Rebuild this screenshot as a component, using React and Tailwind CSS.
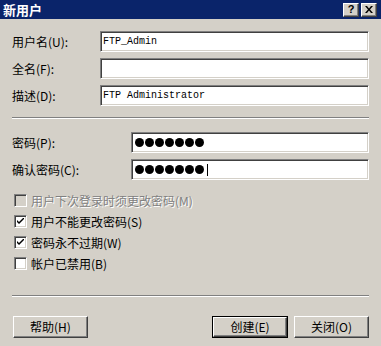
import React from "react";

const cjk = { fontFamily: '"Noto Sans CJK SC", "Noto Sans", sans-serif' };

function Sunken({ children, className = "" }) {
  return (
    <div
      className={
        "h-[21px] bg-white border border-t-[#808080] border-l-[#808080] border-b-white border-r-white shadow-[inset_1px_1px_0_#404040,inset_-1px_-1px_0_#d4d0c8] flex items-center pl-[2px] " +
        className
      }
    >
      {children}
    </div>
  );
}

function Field({ label, value, labelW = "w-[88px]" }) {
  return (
    <div className="flex items-center">
      <div className={labelW + " text-[12px] leading-[14px] text-black"} style={cjk}>
        {label}
      </div>
      <Sunken className="flex-1">
        <span
          className="text-[10px] leading-[12px] text-black whitespace-pre"
          style={{ fontFamily: '"Liberation Mono", monospace' }}
        >
          {value}
        </span>
      </Sunken>
    </div>
  );
}

function Dots({ cursor, n }) {
  const arr = Array.from({ length: n }, (_, i) => i);
  return (
    <div className="flex items-center gap-[1px] pl-[1px]">
      {arr.map((i) => (
        <div key={i} className="w-[9px] h-[9px] rounded-full bg-black" />
      ))}
      {cursor && <div className="w-[1px] h-[12px] bg-black ml-[2px]" />}
    </div>
  );
}

function PwField({ label, cursor, n }) {
  return (
    <div className="flex items-center">
      <div className="w-[119px] text-[12px] leading-[14px] text-black" style={cjk}>
        {label}
      </div>
      <Sunken className="flex-1">
        <Dots cursor={cursor} n={n} />
      </Sunken>
    </div>
  );
}

function Check({ label, checked, disabled }) {
  return (
    <div className="h-[21px] flex items-center">
      <div
        className={
          "w-[13px] h-[13px] ml-[2px] border border-t-[#808080] border-l-[#808080] border-b-white border-r-white shadow-[inset_1px_1px_0_#404040,inset_-1px_-1px_0_#d4d0c8] flex items-center justify-center " +
          (disabled ? "bg-[#d4d0c8]" : "bg-white")
        }
      >
        {checked && (
          <svg width="7" height="7" viewBox="0 0 7 7">
            <path d="M0 2 L0 4 L2 6 L7 1 L7 -1 L2 4 Z" fill="#000" />
          </svg>
        )}
      </div>
      <span
        className={
          "ml-[4px] text-[12px] leading-[14px] " +
          (disabled ? "text-[#808080] [text-shadow:1px_1px_0_#ffffff]" : "text-black")
        }
        style={cjk}
      >
        {label}
      </span>
    </div>
  );
}

function Button({ children, def, className = "" }) {
  const inner = (
    <div className="w-full h-full bg-[#d4d0c8] border border-t-white border-l-white border-b-[#404040] border-r-[#404040] shadow-[inset_-1px_-1px_0_#808080] flex items-center justify-center text-[12px] leading-[14px] text-black" style={cjk}>
      {children}
    </div>
  );
  if (def)
    return <div className={"h-[22px] border border-black " + className}>{inner}</div>;
  return <div className={"h-[22px] " + className}>{inner}</div>;
}

function Divider({ className = "" }) {
  return <div className={"h-[2px] border-t border-t-[#808080] border-b border-b-white " + className} />;
}

export default function App() {
  return (
    <div className="w-[381px] h-[346px] bg-[#d4d0c8] flex flex-col overflow-hidden">
      <div className="h-[19px] bg-[#0a246a] flex items-center justify-between pl-[3px] pr-[4px]">
        <span className="text-white font-bold text-[13px] leading-[15px]" style={cjk}>
          新用户
        </span>
        <div className="flex gap-[2px]">
          <div className="w-[16px] h-[14px] bg-[#d4d0c8] border border-t-white border-l-white border-b-[#404040] border-r-[#404040] shadow-[inset_-1px_-1px_0_#808080] flex items-center justify-center text-[11px] font-bold leading-[11px] text-black" style={{ fontFamily: '"Liberation Sans", sans-serif' }}>
            ?
          </div>
          <div className="w-[16px] h-[14px] bg-[#d4d0c8] border border-t-white border-l-white border-b-[#404040] border-r-[#404040] shadow-[inset_-1px_-1px_0_#808080] flex items-center justify-center">
            <svg width="8" height="7" viewBox="0 0 8 7">
              <path d="M0 0 H2 L4 2.5 L6 0 H8 L5 3.5 L8 7 H6 L4 4.5 L2 7 H0 L3 3.5 Z" fill="#000" />
            </svg>
          </div>
        </div>
      </div>

      <div className="flex-1 flex flex-col px-[12px]">
        <div className="mt-[12px] flex flex-col gap-[6px]">
          <Field label="用户名(U):" value="FTP_Admin" />
          <Field label="全名(F):" value="" />
          <Field label="描述(D):" value="FTP Administrator" />
        </div>
        <Divider className="mt-[11px]" />
        <div className="mt-[13px] flex flex-col gap-[6px]">
          <PwField label="密码(P):" n={7} />
          <PwField label="确认密码(C):" cursor n={7} />
        </div>
        <div className="mt-[10px] flex flex-col">
          <Check label="用户下次登录时须更改密码(M)" disabled />
          <Check label="用户不能更改密码(S)" checked />
          <Check label="密码永不过期(W)" checked />
          <Check label="帐户已禁用(B)" />
        </div>
        <Divider className="mt-[21px]" />
        <div className="mt-[19px] flex items-center">
          <Button className="w-[75px] ml-[1px]">帮助(H)</Button>
          <div className="flex-1" />
          <Button def className="w-[76px]">创建(E)</Button>
          <Button className="w-[75px] ml-[6px]">关闭(O)</Button>
        </div>
      </div>
    </div>
  );
}
